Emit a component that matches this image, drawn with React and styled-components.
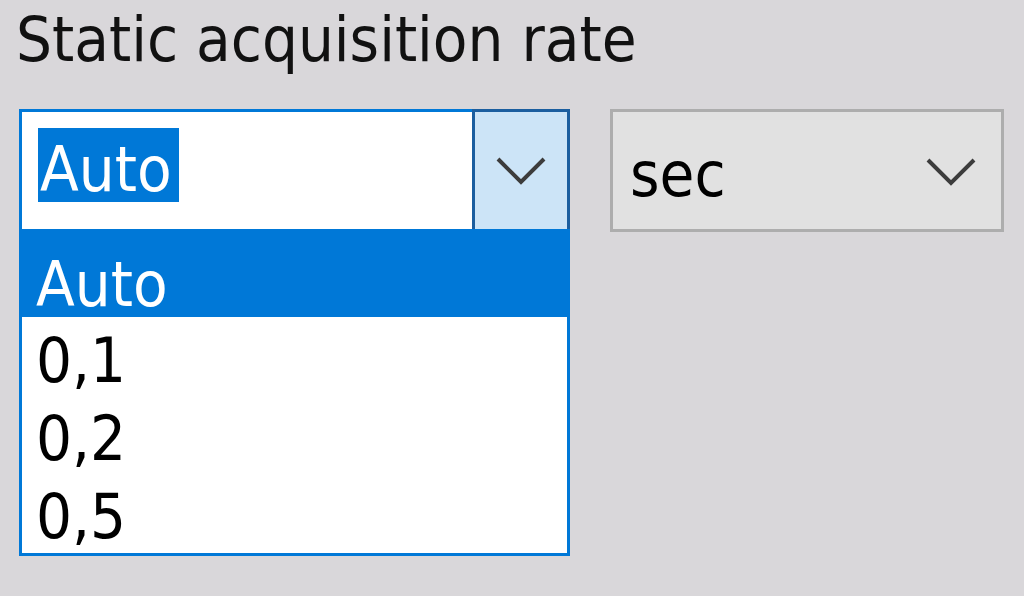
import React from "react";
import styled, { createGlobalStyle } from "styled-components";

const Global = createGlobalStyle`
  html, body {
    margin: 0;
    padding: 0;
    background: #d9d7da;
  }
  body {
    width: 1024px;
    height: 596px;
    overflow: hidden;
    font-family: "DejaVu Sans Condensed", "DejaVu Sans", sans-serif;
    font-stretch: condensed;
  }
`;

const Page = styled.div`
  padding: 3px 0 0 19px;
  font-size: 63px;
  color: #000;
`;

const Label = styled.div`
  margin-left: -3px;
  line-height: 73px;
  color: #111;
`;

const Row = styled.div`
  display: flex;
  gap: 40px;
  margin-top: 33px;
`;

const EditCombo = styled.div`
  position: relative;
  display: flex;
  width: 551px;
  height: 123px;
  box-sizing: border-box;
`;

const EditField = styled.div`
  flex: 1;
  background: #fff;
  border: 3px solid #0078d7;
  border-right: none;
  padding: 16px 0 0 16px;
`;

const Selected = styled.span`
  display: inline-block;
  padding: 10px 7px 0 2px;
  line-height: 64px;
  background: #0078d7;
  color: #fff;
`;

const DropButton = styled.div`
  width: 98px;
  box-sizing: border-box;
  display: flex;
  align-items: center;
  justify-content: center;
  background: #cce4f7;
  border: 3px solid #1b5e9f;
  padding-top: 2px;
`;

const ListCombo = styled.div`
  display: flex;
  align-items: flex-start;
  width: 394px;
  height: 123px;
  box-sizing: border-box;
  background: #e1e1e1;
  border: 3px solid #adadad;
  padding: 21px 0 0 17px;
`;

const Value = styled.span`
  display: inline-block;
  padding-top: 10px;
  line-height: 64px;
`;

const ChevronSlot = styled.div`
  margin-left: auto;
  margin-right: 25px;
  margin-top: 25px;
  display: flex;
`;

const Popup = styled.ul`
  position: absolute;
  left: 0;
  top: 120px;
  width: 551px;
  box-sizing: border-box;
  margin: 0;
  padding: 0 0 2px;
  list-style: none;
  background: #fff;
  border: 3px solid #0078d7;
`;

const Item = styled.li`
  height: ${(p) => (p.$first ? 85 : 78)}px;
  box-sizing: border-box;
  padding: ${(p) => (p.$first ? 21 : 11)}px 0 0 14px;
  line-height: ${(p) => (p.$first ? 64 : 66)}px;
  background: ${(p) => (p.$active ? "#0078d7" : "transparent")};
  color: ${(p) => (p.$active ? "#fff" : "#000")};
`;

const Chevron = () => (
  <svg width="50" height="29" viewBox="0 0 50 29">
    <polyline
      points="2,2 25,25 48,2"
      fill="none"
      stroke="#3c3c3c"
      strokeWidth="4"
    />
  </svg>
);

const options = ["Auto", "0,1", "0,2", "0,5"];

export default function App() {
  return (
    <>
      <Global />
      <Page>
        <Label>Static acquisition rate</Label>
        <Row>
          <EditCombo>
            <EditField>
              <Selected>Auto</Selected>
            </EditField>
            <DropButton>
              <Chevron />
            </DropButton>
            <Popup>
              {options.map((o, i) => (
                <Item key={o} $first={i === 0} $active={i === 0}>
                  {o}
                </Item>
              ))}
            </Popup>
          </EditCombo>
          <ListCombo>
            <Value>sec</Value>
            <ChevronSlot>
              <Chevron />
            </ChevronSlot>
          </ListCombo>
        </Row>
      </Page>
    </>
  );
}
